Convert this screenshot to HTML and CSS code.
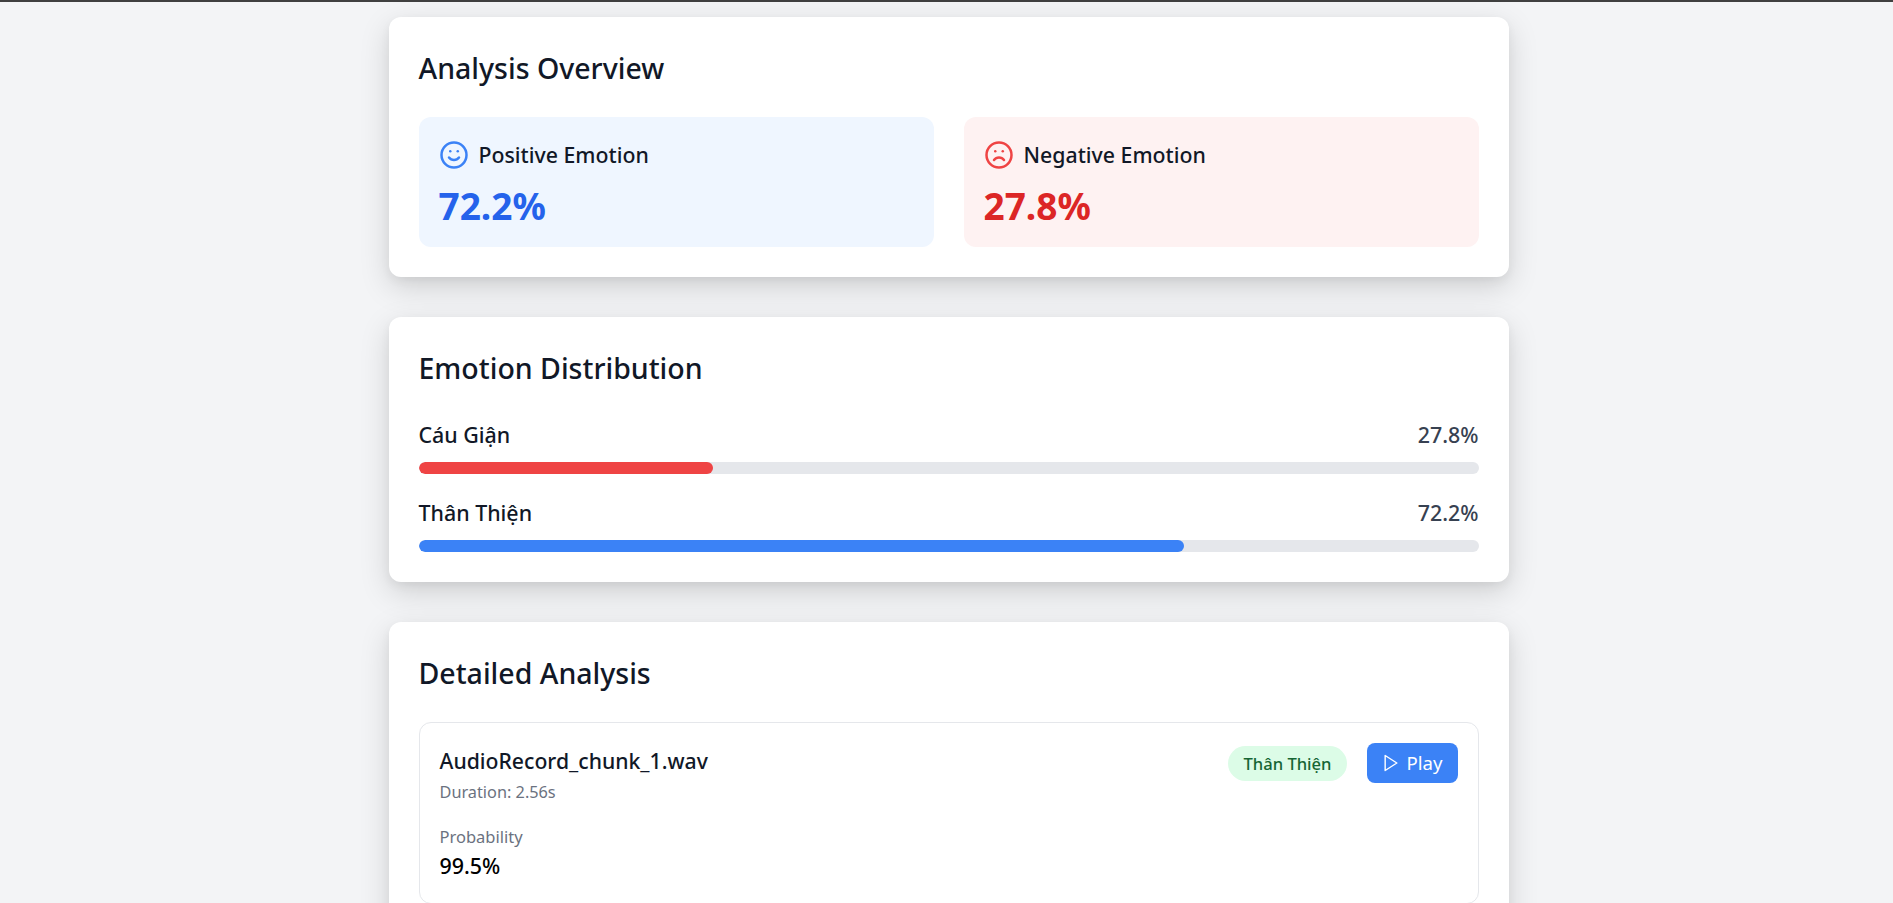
FILE: index.html
```html
<!DOCTYPE html>
<html lang="en">
<head>
  <meta charset="UTF-8" />
  <title>Emotion Analysis</title>
  <link rel="stylesheet" href="styles.css">
</head>
<body>

<div class="topo"></div>

<main class="pagina">

  <section class="card">
    <h2>Analysis Overview</h2>
    <div class="resumo">
      <div class="caixa caixa-azul">
        <div class="caixa-titulo">
          <svg class="icone icone-azul" viewBox="0 0 24 24" fill="none" stroke="currentColor" stroke-width="2" stroke-linecap="round" stroke-linejoin="round">
            <circle cx="12" cy="12" r="10"/>
            <path d="M8 14s1.500 2 4 2 4-2 4-2"/>
            <line x1="9" y1="9" x2="9.010" y2="9"/>
            <line x1="15" y1="9" x2="15.010" y2="9"/>
          </svg>
          <span>Positive Emotion</span>
        </div>
        <div class="valor valor-azul">72.2%</div>
      </div>
      <div class="caixa caixa-vermelha">
        <div class="caixa-titulo">
          <svg class="icone icone-vermelho" viewBox="0 0 24 24" fill="none" stroke="currentColor" stroke-width="2" stroke-linecap="round" stroke-linejoin="round">
            <circle cx="12" cy="12" r="10"/>
            <path d="M16 16s-1.500-2-4-2-4 2-4 2"/>
            <line x1="9" y1="9" x2="9.010" y2="9"/>
            <line x1="15" y1="9" x2="15.010" y2="9"/>
          </svg>
          <span>Negative Emotion</span>
        </div>
        <div class="valor valor-vermelho">27.8%</div>
      </div>
    </div>
  </section>

  <section class="card">
    <h2>Emotion Distribution</h2>
    <div class="linha">
      <div class="linha-texto"><span class="nome">Cáu Giận</span><span class="pct">27.8%</span></div>
      <div class="barra"><div class="preenche preenche-vermelho" style="width: 27.8%"></div></div>
    </div>
    <div class="linha">
      <div class="linha-texto"><span class="nome">Thân Thiện</span><span class="pct">72.2%</span></div>
      <div class="barra"><div class="preenche preenche-azul" style="width: 72.2%"></div></div>
    </div>
  </section>

  <section class="card">
    <h2>Detailed Analysis</h2>
    <div class="item">
      <div class="item-topo">
        <div>
          <div class="arquivo">AudioRecord_chunk_1.wav</div>
          <div class="duracao">Duration: 2.56s</div>
        </div>
        <div class="acoes">
          <span class="etiqueta">Thân Thiện</span>
          <button class="tocar">
            <svg class="icone-play" viewBox="0 0 24 24" fill="none" stroke="currentColor" stroke-width="2" stroke-linecap="round" stroke-linejoin="round">
              <polygon points="5 3 19 12 5 21 5 3"/>
            </svg>
            Play
          </button>
        </div>
      </div>
      <div class="rotulo">Probability</div>
      <div class="prob">99.5%</div>
    </div>
  </section>

</main>

</body>
</html>
```

FILE: styles.css
```css
html, body {
  height: 903px;
  overflow: hidden;
}

body {
  font-family: "Noto Sans", Arial, sans-serif;
  background-color: #f3f4f6;
  margin: 0;
  color: #111827;
}

.topo {
  height: 2px;
  background-color: #404040;
}

.pagina {
  width: 1120px;
  margin: 0 auto;
  padding: 15px 0 0 4px;
  display: flex;
  flex-direction: column;
  gap: 40px;
}

.card {
  background-color: #fff;
  border-radius: 12px;
  padding: 30px;
  box-shadow: 0 10px 30px rgba(0, 0, 0, 0.15), 0 4px 10px rgba(0, 0, 0, 0.05);
}

h2 {
  margin: 0 0 30px;
  padding-top: 3px;
  font-size: 28.5px;
  line-height: 36.5px;
  font-weight: 500;
}

.resumo {
  display: grid;
  grid-template-columns: 1fr 1fr;
  gap: 30px;
}

.caixa {
  height: 130px;
  box-sizing: border-box;
  padding: 20px;
  border-radius: 12px;
}

.caixa-azul { background-color: #eff6ff; }
.caixa-vermelha { background-color: #fef2f2; }

.caixa-titulo {
  display: flex;
  align-items: center;
  gap: 10px;
  font-size: 21.3px;
  font-weight: 500;
  line-height: 36px;
}

.icone {
  width: 30px;
  height: 30px;
}

.icone-azul { color: #3b82f6; }
.icone-vermelho { color: #ef4444; }

.valor {
  font-size: 37px;
  line-height: 50px;
  font-weight: 700;
  margin-top: 8px;
}

.valor-azul { color: #2563eb; }
.valor-vermelho { color: #dc2626; }

.linha { margin-bottom: 20px; }
.linha:last-child { margin-bottom: 0; }

.linha-texto {
  display: flex;
  justify-content: space-between;
  font-size: 21.4px;
  line-height: 38px;
  margin-bottom: 8px;
}

.nome { font-weight: 500; }
.pct { color: #374151; font-weight: 500; }

.barra {
  height: 12px;
  background-color: #e5e7eb;
  border-radius: 6px;
  overflow: hidden;
}

.preenche {
  height: 100%;
  border-radius: 6px;
}

.preenche-vermelho { background-color: #ef4444; }
.preenche-azul { background-color: #3b82f6; }

.item {
  border: 1px solid #e5e7eb;
  border-radius: 12px;
  padding: 20px 20px 21px;
}

.item-topo {
  display: flex;
  justify-content: space-between;
  align-items: flex-start;
}

.arquivo {
  font-size: 21.2px;
  line-height: 36px;
  font-weight: 500;
}

.duracao {
  font-size: 16.3px;
  line-height: 27px;
  color: #6b7280;
}

.acoes {
  display: flex;
  align-items: center;
  gap: 20px;
}

.etiqueta {
  background-color: #dcfce7;
  color: #166534;
  border-radius: 18px;
  font-size: 16.6px;
  font-weight: 500;
  line-height: 35px;
  padding: 0 15px;
  margin-top: 1px;
}

.tocar {
  display: flex;
  align-items: center;
  gap: 6px;
  height: 40px;
  padding: 0 15px 0 14px;
  border: none;
  border-radius: 8px;
  background-color: #3b82f6;
  color: #fff;
  font-family: inherit;
  font-size: 18.6px;
}

.icone-play {
  width: 20px;
  height: 20px;
  stroke-width: 1.7;
}

.rotulo {
  margin-top: 19px;
  font-size: 16.5px;
  line-height: 24px;
  color: #6b7280;
}

.prob {
  margin-top: 1px;
  font-size: 21.4px;
  line-height: 32px;
  font-weight: 500;
  color: #000;
}
```
